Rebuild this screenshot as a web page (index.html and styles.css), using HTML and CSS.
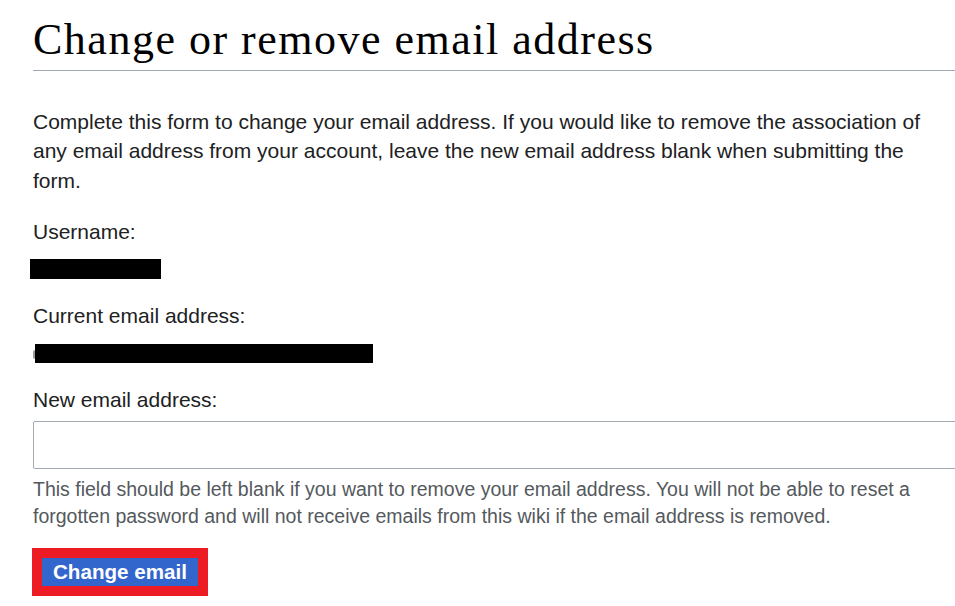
FILE: index.html
```html
<!DOCTYPE html>
<html lang="en">
<head>
<meta charset="utf-8">
<title>Change or remove email address</title>
<link rel="stylesheet" href="styles.css">
</head>
<body>
<main class="page">
  <h1 class="title">Change or remove email address</h1>
  <p class="intro">Complete this form to change your email address. If you would like to remove the association of any email address from your account, leave the new email address blank when submitting the form.</p>
  <div class="field">
    <div class="label">Username:</div>
    <div class="redact redact-user"></div>
  </div>
  <div class="field">
    <div class="label">Current email address:</div>
    <div class="redact-row"><span class="peek"></span><span class="redact redact-mail"></span></div>
  </div>
  <div class="field field-new">
    <label class="label" for="newmail">New email address:</label>
    <input class="input" id="newmail" type="email">
    <p class="help">This field should be left blank if you want to remove your email address. You will not be able to reset a forgotten password and will not receive emails from this wiki if the email address is removed.</p>
  </div>
  <div class="highlight"><button class="btn" type="button">Change email</button></div>
</main>
</body>
</html>
```

FILE: styles.css
```css
html, body {
  margin: 0;
  padding: 0;
  background: #ffffff;
  overflow: hidden;
}
.page {
  width: 1000px;
  padding-left: 33px;
  font-family: "Liberation Sans", Arial, sans-serif;
  font-size: 21px;
  line-height: 29.4px;
  color: #202122;
}
.title {
  margin: 0;
  padding: 14px 0 4px;
  font-family: "Liberation Serif", "Times New Roman", serif;
  font-weight: normal;
  font-size: 44px;
  line-height: 52px;
  letter-spacing: 1.5px;
  color: #000000;
  border-bottom: 1px solid #a2a9b1;
}
.intro {
  margin: 36px 0 0;
  width: 905px;
}
.field {
  margin-top: 21.7px;
}
.field + .field {
  margin-top: 22.3px;
}
.label {
  display: block;
  line-height: 29.4px;
}
.redact {
  background: #000000;
}
.redact-user {
  margin: 12.3px 0 0 -3px;
  width: 131px;
  height: 20px;
}
.redact-row {
  display: flex;
  align-items: center;
  margin-top: 13.3px;
  height: 19px;
}
.peek {
  width: 2px;
  height: 9px;
  margin-top: 2px;
  border-radius: 2px 0 0 2px;
  background: #9a9a9a;
}
.redact-mail {
  width: 338px;
  height: 19px;
}
.input {
  display: block;
  box-sizing: border-box;
  margin-top: 6.3px;
  width: 960px;
  height: 48px;
  border: 1px solid #a2a9b1;
  border-radius: 2px;
  background: #ffffff;
  padding: 6px 8px;
  font: inherit;
}
.help {
  margin: 7px 0 0;
  width: 905px;
  font-size: 19.5px;
  line-height: 27px;
  color: #54595d;
}
.highlight {
  display: inline-flex;
  margin: 18.5px 0 0 -1px;
  border: 10px solid #ed1c24;
}
.btn {
  margin: 0;
  border: 0;
  height: 28px;
  padding: 0 11px;
  background: #3366cc;
  color: #ffffff;
  font-family: "Liberation Sans", Arial, sans-serif;
  font-weight: bold;
  font-size: 20.6px;
  line-height: 28px;
  border-radius: 0;
}
```
